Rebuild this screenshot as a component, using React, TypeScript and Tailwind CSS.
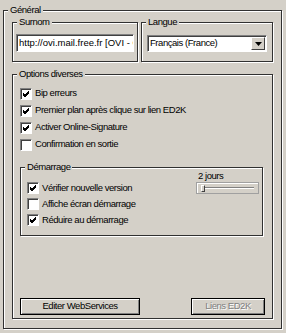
import { ReactNode } from 'react';

const face = "font-['Liberation_Sans',Arial,sans-serif]";

function GroupBox(props: { label: string; className?: string; children?: ReactNode }) {
    const { label, className, children } = props;
    return (
        <div
            className={`flex flex-col border border-[#303030] shadow-[1px_1px_0_#fff,inset_1px_1px_0_#fff] ${className ?? ''}`}
        >
            <span className="-mt-[8px] ml-[4px] self-start bg-[#d4d0c8] px-[2px] leading-[14px]">
                {label}
            </span>
            {children}
        </div>
    );
}

function Check(props: { label: string; checked?: boolean; tight?: boolean }) {
    return (
        <div className={`flex items-center gap-[3px] ${props.tight ? 'h-[16px]' : 'h-[17px]'}`}>
            <span className="flex h-[12px] w-[12px] items-center justify-center border border-b-white border-l-[#808080] border-r-white border-t-[#808080] bg-white shadow-[inset_1px_1px_0_#404040]">
                {props.checked && (
                    <svg width="8" height="8" viewBox="0 0 8 8">
                        <path d="M1 3 L3 5 L7 1 M1 4 L3 6 L7 2 M1 5 L3 7 L7 3" stroke="#000" strokeWidth="1" fill="none" />
                    </svg>
                )}
            </span>
            <span>{props.label}</span>
        </div>
    );
}

function Button(props: { label: string; disabled?: boolean; className?: string }) {
    return (
        <div
            className={`flex h-[17px] items-center justify-center border border-black bg-[#d4d0c8] shadow-[inset_1px_1px_0_#fff,inset_-1px_-1px_0_#808080] ${props.className ?? ''} ${props.disabled ? 'text-[#808080] [text-shadow:1px_1px_0_#fff]' : ''}`}
        >
            {props.label}
        </div>
    );
}

export default function App() {
    return (
        <div className={`h-[333px] w-[286px] bg-[#d4d0c8] pl-[3px] pt-[10px] text-[9.5px] tracking-[-0.45px] text-black ${face}`}>
            <GroupBox label="Général" className="h-[319px] w-[279px]">
                <div className="mt-[5px] flex gap-[3px] pl-[8px]">
                    <GroupBox label="Surnom" className="h-[40px] w-[126px]">
                        <div className="mx-[3px] mt-[5px] flex h-[18px] items-center overflow-hidden whitespace-nowrap border border-b-white border-l-[#808080] border-r-white border-t-[#808080] bg-white pl-[2px] tracking-normal shadow-[inset_1px_1px_0_#404040]">
                            http://ovi.mail.free.fr [OVI - Ovi]
                        </div>
                    </GroupBox>
                    <GroupBox label="Langue" className="h-[40px] w-[132px]">
                        <div className="mx-[5px] mt-[6px] flex h-[17px] items-center border border-b-white border-l-[#808080] border-r-white border-t-[#808080] bg-white shadow-[inset_1px_1px_0_#404040]">
                            <span className="flex-1 pl-[2px]">Français (France)</span>
                            <span className="mr-px flex h-[13px] w-[14px] items-center justify-center border border-b-[#404040] border-l-white border-r-[#404040] border-t-white bg-[#d4d0c8]">
                                <svg width="7" height="4" viewBox="0 0 7 4">
                                    <path d="M0 0 H7 L3.5 4 Z" fill="#000" />
                                </svg>
                            </span>
                        </div>
                    </GroupBox>
                </div>
                <GroupBox label="Options diverses" className="ml-[8px] mt-[12px] h-[245px] w-[261px]">
                    <div className="mt-[4px] flex flex-col pl-[7px]">
                        <Check label="Bip erreurs" checked />
                        <Check label="Premier plan après clique sur lien ED2K" checked />
                        <Check label="Activer Online-Signature" checked />
                        <Check label="Confirmation en sortie" />
                    </div>
                    <GroupBox label="Démarrage" className="ml-[7px] mt-[14px] h-[69px] w-[243px]">
                        <div className="flex">
                            <div className="mt-[6px] flex flex-col pl-[6px]">
                                <Check label="Vérifier nouvelle version" checked tight />
                                <Check label="Affiche écran démarrage" tight />
                                <Check label="Réduire au démarrage" checked tight />
                            </div>
                            <div className="ml-auto mr-[3px] -mt-[5px] flex flex-col">
                                <span className="ml-[2px] leading-[13px]">2 jours</span>
                                <div className="relative h-[12px] w-[63px] border border-[#a0a0a0] shadow-[inset_1px_1px_0_#fff]">
                                    <div className="absolute left-[5px] right-[4px] top-[4px] h-[2px] border-b border-t border-b-white border-t-[#808080]" />
                                    <div className="absolute left-[4px] top-[2px] h-[7px] w-[4px] border border-b-[#404040] border-l-white border-r-[#404040] border-t-white bg-[#d4d0c8]" />
                                </div>
                            </div>
                        </div>
                    </GroupBox>
                    <div className="mt-auto mb-[3px] flex justify-between px-[7px]">
                        <Button label="Editer WebServices" className="w-[120px]" />
                        <Button label="Liens ED2K" disabled className="w-[74px]" />
                    </div>
                </GroupBox>
            </GroupBox>
        </div>
    );
}
